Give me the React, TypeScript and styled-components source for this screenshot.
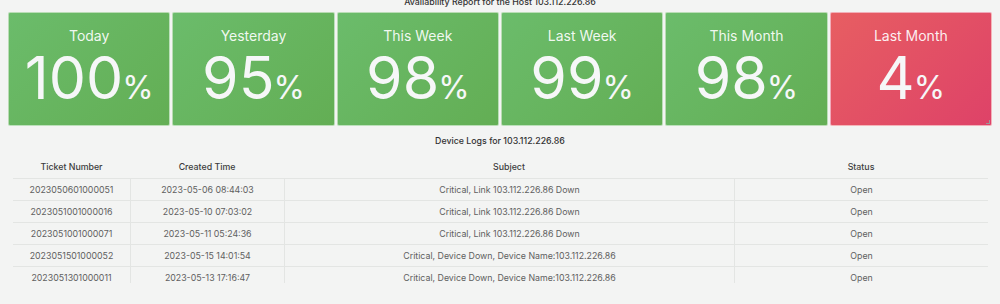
import React from "react";
import styled, { createGlobalStyle } from "styled-components";

const Global = createGlobalStyle`
  html, body { margin: 0; padding: 0; background: #f3f4f3; }
  body { font-family: Inter, "Noto Sans", sans-serif; overflow: hidden; }
`;

const Page = styled.div`
  display: flex;
  flex-direction: column;
  width: 1000px;
  height: 304px;
  background: #f3f4f3;
`;

const ReportTitle = styled.div`
  margin-top: -6px;
  height: 16px;
  line-height: 16px;
  text-align: center;
  font-size: 8.8px;
  color: #333;
  font-weight: 500;
  margin-bottom: 2px;
`;

const Cards = styled.div`
  display: grid;
  grid-template-columns: repeat(6, 1fr);
  gap: 2px;
  padding: 0 8px;
  height: 114px;
`;

const Card = styled.div<{ $bad?: boolean }>`
  position: relative;
  display: flex;
  flex-direction: column;
  align-items: center;
  border: 1px solid rgba(255, 255, 255, 0.55);
  border-radius: 2px;
  background: ${(p) =>
    p.$bad
      ? "linear-gradient(135deg, #e75e62 0%, #de4268 100%)"
      : "linear-gradient(135deg, #6bbc6b 0%, #63ae54 100%)"};
  color: #f6f7f8;
`;

const Label = styled.div`
  margin-top: 13px;
  font-size: 14px;
  line-height: 20px;
  color: rgba(255, 255, 255, 0.92);
`;

const Value = styled.div`
  display: flex;
  align-items: baseline;
  margin-top: 4px;
  font-size: 59px;
  font-weight: 400;
  line-height: 56px;
`;

const Pct = styled.span`
  font-size: 32px;
  margin-left: -1px;
`;

const Grip = styled.span`
  position: absolute;
  right: 1px;
  bottom: 1px;
  width: 3px;
  height: 3px;
  border-right: 1px solid #9a9a9a;
  border-bottom: 1px solid #9a9a9a;
`;

const LogsTitle = styled.div`
  margin-top: 8px;
  height: 14px;
  line-height: 14px;
  text-align: center;
  font-size: 8.8px;
  color: #333;
  font-weight: 500;
`;

const Table = styled.div`
  margin: 8px 12px 0 13px;
  display: grid;
  grid-template-columns: 117px 154px 450px 1fr;
`;

const Head = styled.div`
  height: 22px;
  line-height: 22px;
  text-align: center;
  font-size: 8.8px;
  font-weight: 500;
  color: #3c3c3c;
  border-bottom: 1px solid #e3e5e3;
`;

const Cell = styled.div<{ $first?: boolean; $last?: boolean }>`
  height: ${(p) => (p.$last ? "16px" : "21px")};
  line-height: 21px;
  text-align: center;
  font-size: 8.8px;
  color: #606060;
  overflow: hidden;
  border-bottom: ${(p) => (p.$last ? "none" : "1px solid #e3e5e3")};
  border-left: ${(p) => (p.$first ? "none" : "1px solid #e3e5e3")};
`;

const stats = [
  { label: "Today", value: "100" },
  { label: "Yesterday", value: "95" },
  { label: "This Week", value: "98" },
  { label: "Last Week", value: "99" },
  { label: "This Month", value: "98" },
  { label: "Last Month", value: "4", bad: true },
];

const rows = [
  ["2023050601000051", "2023-05-06 08:44:03", "Critical, Link 103.112.226.86 Down", "Open"],
  ["2023051001000016", "2023-05-10 07:03:02", "Critical, Link 103.112.226.86 Down", "Open"],
  ["2023051001000071", "2023-05-11 05:24:36", "Critical, Link 103.112.226.86 Down", "Open"],
  ["2023051501000052", "2023-05-15 14:01:54", "Critical, Device Down, Device Name:103.112.226.86", "Open"],
  ["2023051301000011", "2023-05-13 17:16:47", "Critical, Device Down, Device Name:103.112.226.86", "Open"],
];

export default function App() {
  return (
    <Page>
      <Global />
      <ReportTitle>Availability Report for the Host 103.112.226.86</ReportTitle>
      <Cards>
        {stats.map((s, i) => (
          <Card key={s.label} $bad={s.bad}>
            <Label>{s.label}</Label>
            <Value>
              {s.value}
              <Pct>%</Pct>
            </Value>
            {i === stats.length - 1 && <Grip />}
          </Card>
        ))}
      </Cards>
      <LogsTitle>Device Logs for 103.112.226.86</LogsTitle>
      <Table>
        <Head>Ticket Number</Head>
        <Head>Created Time</Head>
        <Head>Subject</Head>
        <Head>Status</Head>
        {rows.map((r, ri) =>
          r.map((c, ci) => (
            <Cell key={ri + "-" + ci} $first={ci === 0} $last={ri === rows.length - 1}>
              {c}
            </Cell>
          ))
        )}
      </Table>
    </Page>
  );
}
